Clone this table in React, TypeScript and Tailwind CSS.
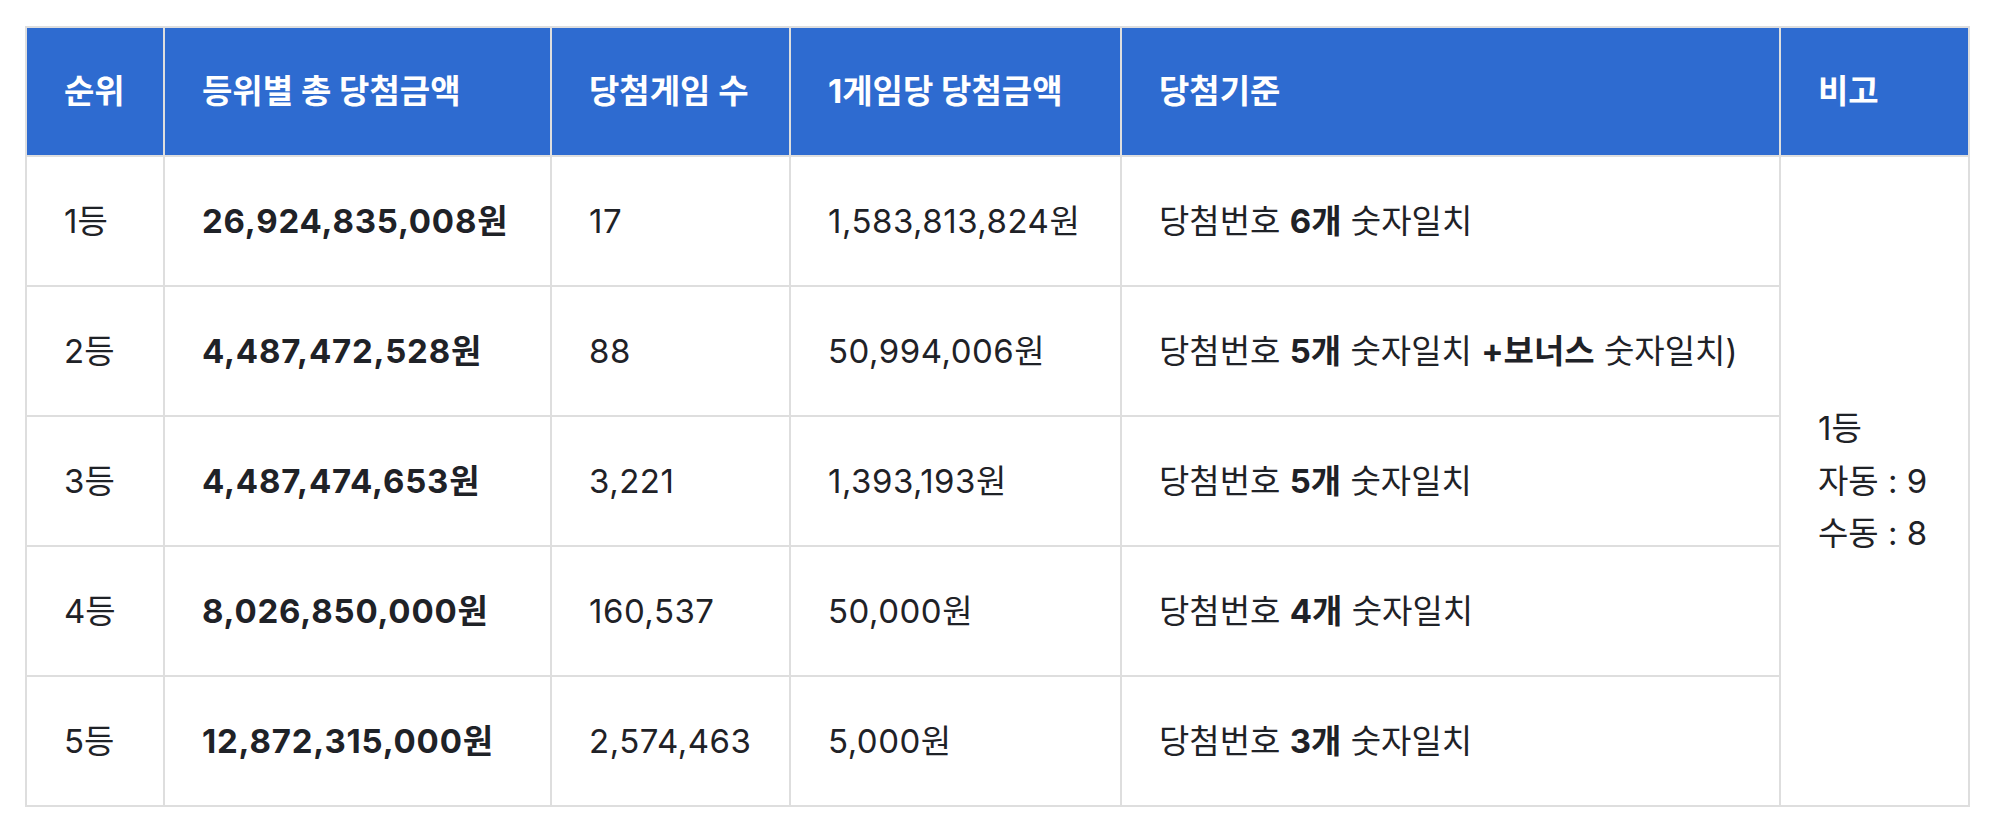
import React from 'react';

type Row = {
    rank: string;
    total: string;
    games: string;
    perGame: string;
    count: string;
    bonus?: boolean;
};

const rows: Row[] = [
    { rank: '1등', total: '26,924,835,008원', games: '17', perGame: '1,583,813,824원', count: '6개' },
    { rank: '2등', total: '4,487,472,528원', games: '88', perGame: '50,994,006원', count: '5개', bonus: true },
    { rank: '3등', total: '4,487,474,653원', games: '3,221', perGame: '1,393,193원', count: '5개' },
    { rank: '4등', total: '8,026,850,000원', games: '160,537', perGame: '50,000원', count: '4개' },
    { rank: '5등', total: '12,872,315,000원', games: '2,574,463', perGame: '5,000원', count: '3개' },
];

const th = 'border-2 border-[#dedede] bg-[#2e6bd0] text-left font-bold text-white pl-[37px] pr-3 align-middle';
const td = 'border-2 border-[#dedede] pl-[37px] pr-3 align-middle';

export default function App() {
    return (
        <div
            className="min-h-screen bg-white px-[25px] pt-[26px] text-[33px] leading-[1.6] text-[#1f2227]"
            style={{ fontFamily: 'Inter, "Noto Sans CJK KR", sans-serif' }}
        >
            <table className="w-[1943px] border-collapse table-fixed">
                <thead>
                    <tr className="h-[129px]">
                        <th className={`${th} w-[138px]`}>순위</th>
                        <th className={`${th} w-[387px]`}>등위별 총 당첨금액</th>
                        <th className={`${th} w-[239px]`}>당첨게임 수</th>
                        <th className={`${th} w-[331px]`}>1게임당 당첨금액</th>
                        <th className={`${th} w-[659px]`}>당첨기준</th>
                        <th className={`${th} w-[189px]`}>비고</th>
                    </tr>
                </thead>
                <tbody>
                    {rows.map((r, i) => (
                        <tr key={r.rank} className="h-[130px]">
                            <td className={td}>{r.rank}</td>
                            <td className={`${td} font-bold tracking-[0.8px]`}>{r.total}</td>
                            <td className={`${td} tracking-[0.5px]`}>{r.games}</td>
                            <td className={`${td} tracking-[0.5px]`}>{r.perGame}</td>
                            <td className={`${td} whitespace-nowrap`}>
                                당첨번호 <b className="font-bold">{r.count}</b> 숫자일치
                                {r.bonus && (
                                    <>
                                        {' '}<b className="font-bold">+보너스</b> 숫자일치)
                                    </>
                                )}
                            </td>
                            {i === 0 && (
                                <td rowSpan={5} className={td}>
                                    <div>1등</div>
                                    <div>자동 : 9</div>
                                    <div>수동 : 8</div>
                                </td>
                            )}
                        </tr>
                    ))}
                </tbody>
            </table>
        </div>
    );
}
